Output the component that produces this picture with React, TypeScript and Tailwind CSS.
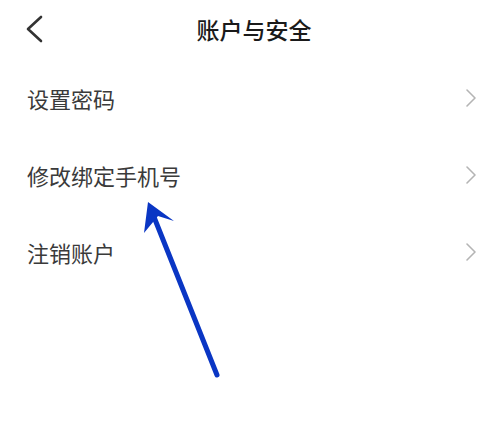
const rows = ["设置密码", "修改绑定手机号", "注销账户"];

function Row({ label }: { label: string }) {
   return (
      <div className="flex items-center justify-between h-[77px] pl-[27px] pr-[18px]">
         <p className="text-[22px] leading-none text-[#3a3a3a]">{label}</p>
         <svg width="12" height="20" viewBox="0 0 12 20" fill="none">
            <path d="M2 2l8 8-8 8" stroke="#b4b4b4" strokeWidth="1.6" strokeLinecap="round" strokeLinejoin="round" />
         </svg>
      </div>
   );
}

export default function App() {
   return (
      <div
         className="relative w-[495px] h-[421px] bg-white overflow-hidden"
         style={{ fontFamily: '"Noto Sans CJK SC", "Noto Sans", sans-serif' }}
      >
         <div className="relative flex items-center justify-center h-[59px]">
            <svg className="absolute left-[25px] top-[14px]" width="19" height="30" viewBox="0 0 19 30" fill="none">
               <path d="M16 3L3 15l13 12" stroke="#333" strokeWidth="2.6" strokeLinecap="round" strokeLinejoin="round" />
            </svg>
            <p className="ml-[13px] text-[23px] font-medium leading-none text-[#1a1a1a]">账户与安全</p>
         </div>
         {rows.map((r) => (
            <Row key={r} label={r} />
         ))}
         {/* annotation arrow drawn over the list */}
         <svg className="absolute left-0 top-0" width="495" height="421" viewBox="0 0 495 421">
            <line x1="217" y1="375" x2="152" y2="212" stroke="#0a36c4" strokeWidth="5" strokeLinecap="round" />
            <polygon points="148,202 174,221 158,216 144,233" fill="#0a36c4" />
         </svg>
      </div>
   );
}
